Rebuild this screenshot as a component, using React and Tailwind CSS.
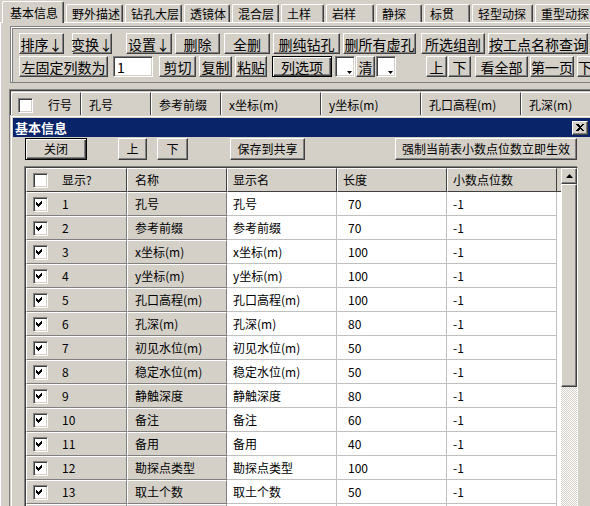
import React from "react";

const raised =
  "border border-t-white border-l-white border-r-[#404040] border-b-[#404040] shadow-[inset_-1px_-1px_#808080]";
const defBtn =
  "border border-black shadow-[inset_1px_1px_#ffffff,inset_-1px_-1px_#404040,inset_-2px_-2px_#808080]";
const sunken =
  "border border-t-[#808080] border-l-[#808080] border-r-white border-b-white shadow-[inset_1px_1px_#404040,inset_-1px_-1px_#d4d0c8]";

function Btn({ className = "", isDefault, children }) {
  return (
    <div
      className={`flex items-center justify-center whitespace-nowrap shrink-0 leading-none bg-[#d4d0c8] ${
        isDefault ? defBtn : raised
      } ${className}`}
    >
      {children}
    </div>
  );
}

function Check({ checked }) {
  return (
    <div className={`relative w-[15px] h-[15px] bg-white shrink-0 ${sunken}`}>
      {checked && (
        <svg width="7" height="7" viewBox="0 0 7 7" className="absolute left-[2px] top-[2px]" shapeRendering="crispEdges">
          <path d="M0 2 L2 4 L6 0 L6 3 L2 7 L0 5 Z" fill="#000" />
        </svg>
      )}
    </div>
  );
}

function Combo() {
  return (
    <div className={`relative w-[20px] h-[21px] bg-white shrink-0 ${sunken}`}>
      <svg width="5" height="3" viewBox="0 0 5 3" className="absolute right-[2px] bottom-[2px]">
        <path d="M0 0 H5 L2.5 3 Z" fill="#000" />
      </svg>
    </div>
  );
}

const tabs = [
  { name: "基本信息", w: "w-[62px]", active: true },
  { name: "野外描述", w: "w-[57px]" },
  { name: "钻孔大层", w: "w-[57px]" },
  { name: "透镜体", w: "w-[46px]" },
  { name: "混合层", w: "w-[47px]" },
  { name: "土样", w: "w-[43px]" },
  { name: "岩样", w: "w-[48px]" },
  { name: "静探", w: "w-[46px]" },
  { name: "标贯", w: "w-[46px]" },
  { name: "轻型动探", w: "w-[61px]" },
  { name: "重型动探", w: "w-[58px]" },
];

const mainCols = [
  { name: "孔号", w: "w-[70px]" },
  { name: "参考前缀", w: "w-[70px]" },
  { name: "x坐标(m)", w: "w-[100px]" },
  { name: "y坐标(m)", w: "w-[100px]" },
  { name: "孔口高程(m)", w: "w-[100px]" },
  { name: "孔深(m)", w: "w-[100px]" },
];

const rows = [
  ["孔号", 70],
  ["参考前缀", 70],
  ["x坐标(m)", 100],
  ["y坐标(m)", 100],
  ["孔口高程(m)", 100],
  ["孔深(m)", 80],
  ["初见水位(m)", 50],
  ["稳定水位(m)", 50],
  ["静触深度", 80],
  ["备注", 60],
  ["备用", 40],
  ["勘探点类型", 100],
  ["取土个数", 50],
];

const hdrCell =
  "flex items-center h-full shrink-0 bg-[#d4d0c8] border-t border-l border-t-white border-l-white border-r border-b border-r-[#404040] border-b-[#404040]";
const grayCell =
  "flex items-center h-full shrink-0 bg-[#d4d0c8] border-t border-l border-t-white border-l-white border-r border-b border-r-[#808080] border-b-[#808080]";
const whiteCell =
  "flex items-center h-full shrink-0 bg-white border-r border-b border-[#c0c0c0]";

export default function App() {
  return (
    <div className="relative w-[590px] h-[506px] overflow-hidden bg-[#d4d0c8] text-black font-['Noto_Sans_CJK_SC','Noto_Sans',sans-serif]">
      {/* tab strip */}
      <div className="flex items-end gap-[2px] h-[22px] pl-[2px] text-[12px]">
        {tabs.map((t) => (
          <div
            key={t.name}
            className={`flex items-center whitespace-nowrap shrink-0 leading-none rounded-t-[2px] border-t border-l border-r border-t-white border-l-white border-r-[#404040] shadow-[inset_-1px_0_#808080] ${t.w} ${
              t.active ? "relative z-10 h-[22px] -mb-px pl-[7px] bg-[#d4d0c8]" : "h-[18px] pl-[5px]"
            }`}
          >
            {t.name}
          </div>
        ))}
      </div>

      {/* tab page */}
      <div className="border-t border-l border-white h-[484px] pt-[3px] pl-[9px]">
        {/* toolbar group */}
        <div className="w-[620px] h-[57px] border border-[#808080] shadow-[inset_1px_1px_#ffffff,inset_2px_2px_#808080] pt-[6px] pl-[8px] text-[14px]">
          <div className="flex h-[21px]">
            <Btn className="w-[45px]">排序↓</Btn>
            <Btn className="w-[40px] ml-[8px]">变换↓</Btn>
            <Btn className="w-[46px] ml-[14px]">设置↓</Btn>
            <Btn className="w-[45px] ml-[3px]">删除</Btn>
            <Btn className="w-[46px] ml-[4px]">全删</Btn>
            <Btn className="w-[67px] ml-[3px]">删纯钻孔</Btn>
            <Btn className="w-[73px] ml-[3px]">删所有虚孔</Btn>
            <Btn className="w-[64px] ml-[5px]">所选组剖</Btn>
            <Btn className="w-[100px] ml-[3px]">按工点名称查询</Btn>
          </div>
          <div className="flex h-[21px] mt-[2px]">
            <Btn className="w-[89px]">左固定列数为</Btn>
            <div className={`w-[40px] h-[21px] ml-[5px] bg-white flex items-center pl-[3px] leading-none shrink-0 ${sunken}`}>1</div>
            <Btn className="w-[37px] ml-[6px]">剪切</Btn>
            <Btn className="w-[33px] ml-[3px]">复制</Btn>
            <Btn className="w-[32px] ml-[3px]">粘贴</Btn>
            <Btn className="w-[60px] ml-[5px]" isDefault>列选项</Btn>
            <div className="ml-[3px]"><Combo /></div>
            <Btn className="w-[19px] ml-[1px]">清</Btn>
            <div className="ml-[1px]"><Combo /></div>
            <Btn className="w-[21px] ml-[30px]">上</Btn>
            <Btn className="w-[23px] ml-[1px]">下</Btn>
            <Btn className="w-[53px] ml-[4px]">看全部</Btn>
            <Btn className="w-[44px] ml-[2px]">第一页</Btn>
            <Btn className="w-[44px] ml-[3px]">下一页</Btn>
          </div>
        </div>

        {/* main grid behind dialog */}
        <div className="mt-[6px] -ml-[1px] w-[640px] h-[420px] border-t border-l border-[#808080] shadow-[inset_1px_1px_#404040] pt-[2px] pl-[1px] text-[12px]">
          <div className="flex h-[26px]">
            <div className={`${hdrCell} w-[70px] pl-[6px]`}>
              <Check />
              <span className="ml-[15px]">行号</span>
            </div>
            {mainCols.map((c) => (
              <div key={c.name} className={`${hdrCell} ${c.w} pl-[7px] whitespace-nowrap`}>
                {c.name}
              </div>
            ))}
          </div>
        </div>
      </div>

      {/* dialog window */}
      <div className="absolute left-[10px] top-[115px] w-[582px] h-[400px] bg-[#d4d0c8] border-t border-l border-[#d4d0c8] shadow-[inset_1px_1px_#ffffff] p-[2px] text-[12px]">
        <div className="flex items-center justify-between h-[19px] bg-[#0a246a] pl-[2px] pr-[2px]">
          <span className="text-white font-bold text-[13px] leading-none">基本信息</span>
          <Btn className="w-[16px] h-[14px]">
            <svg width="8" height="7" viewBox="0 0 8 7" shapeRendering="crispEdges">
              <path d="M0 0 H2 L4 2 L6 0 H8 L5 3.5 L8 7 H6 L4 5 L2 7 H0 L3 3.5 Z" fill="#000" />
            </svg>
          </Btn>
        </div>

        <div className="flex h-[22px] mt-[1px] pl-[12px]">
          <Btn className="w-[62px]" isDefault>关闭</Btn>
          <Btn className="w-[29px] ml-[31px]">上</Btn>
          <Btn className="w-[31px] ml-[10px]">下</Btn>
          <Btn className="w-[75px] ml-[42px]">保存到共享</Btn>
          <Btn className="w-[182px] ml-[90px]">强制当前表小数点位数立即生效</Btn>
        </div>

        {/* columns grid */}
        <div className="flex mt-[7px] ml-[12px] w-[553px] h-[340px] border-t border-l border-[#404040] border-r border-r-white shadow-[-1px_-1px_#808080]">
          <div className="w-[535px] shrink-0">
            <div className="flex h-[24px]">
              <div className={`${hdrCell} w-[101px] pl-[6px]`}>
                <Check />
                <span className="ml-[14px]">显示?</span>
              </div>
              <div className={`${hdrCell} w-[100px] pl-[7px]`}>名称</div>
              <div className={`${hdrCell} w-[110px] pl-[5px]`}>显示名</div>
              <div className={`${hdrCell} w-[110px] pl-[5px]`}>长度</div>
              <div className={`${hdrCell} w-[110px] pl-[5px]`}>小数点位数</div>
              <div className="w-[4px] h-full bg-[#d4d0c8] border-b border-[#404040]" />
            </div>
            {rows.map(([name, len], i) => (
              <div key={i} className="flex h-[24px]">
                <div className={`${grayCell} w-[101px] pl-[6px]`}>
                  <Check checked />
                  <span className="ml-[14px]">{i + 1}</span>
                </div>
                <div className={`${grayCell} w-[100px] pl-[7px] whitespace-nowrap`}>{name}</div>
                <div className={`${whiteCell} w-[110px] pl-[6px] whitespace-nowrap`}>{name}</div>
                <div className={`${whiteCell} w-[110px] pl-[11px]`}>{len}</div>
                <div className={`${whiteCell} w-[110px] pl-[6px]`}>-1</div>
                <div className="w-[4px] h-full bg-white" />
              </div>
            ))}
            {/* next row, only its top edge shows */}
            <div className="flex h-[24px]">
              <div className={`${grayCell} w-[101px]`} />
              <div className={`${grayCell} w-[100px]`} />
              <div className={`${whiteCell} w-[110px]`} />
              <div className={`${whiteCell} w-[110px]`} />
              <div className={`${whiteCell} w-[110px]`} />
              <div className="w-[4px] h-full bg-white" />
            </div>
          </div>

          {/* scrollbar */}
          <div className="w-[16px] shrink-0 flex flex-col">
            <Btn className="w-[16px] h-[16px]">
              <svg width="7" height="4" viewBox="0 0 7 4">
                <path d="M3.5 0 L7 4 H0 Z" fill="#000" />
              </svg>
            </Btn>
            <div className={`w-[16px] h-[203px] shrink-0 ${raised}`} />
            <div className="flex-1 bg-[image:repeating-conic-gradient(#ffffff_0_25%,#d4d0c8_0_50%)] bg-[length:2px_2px]" />
          </div>
        </div>
      </div>
    </div>
  );
}
